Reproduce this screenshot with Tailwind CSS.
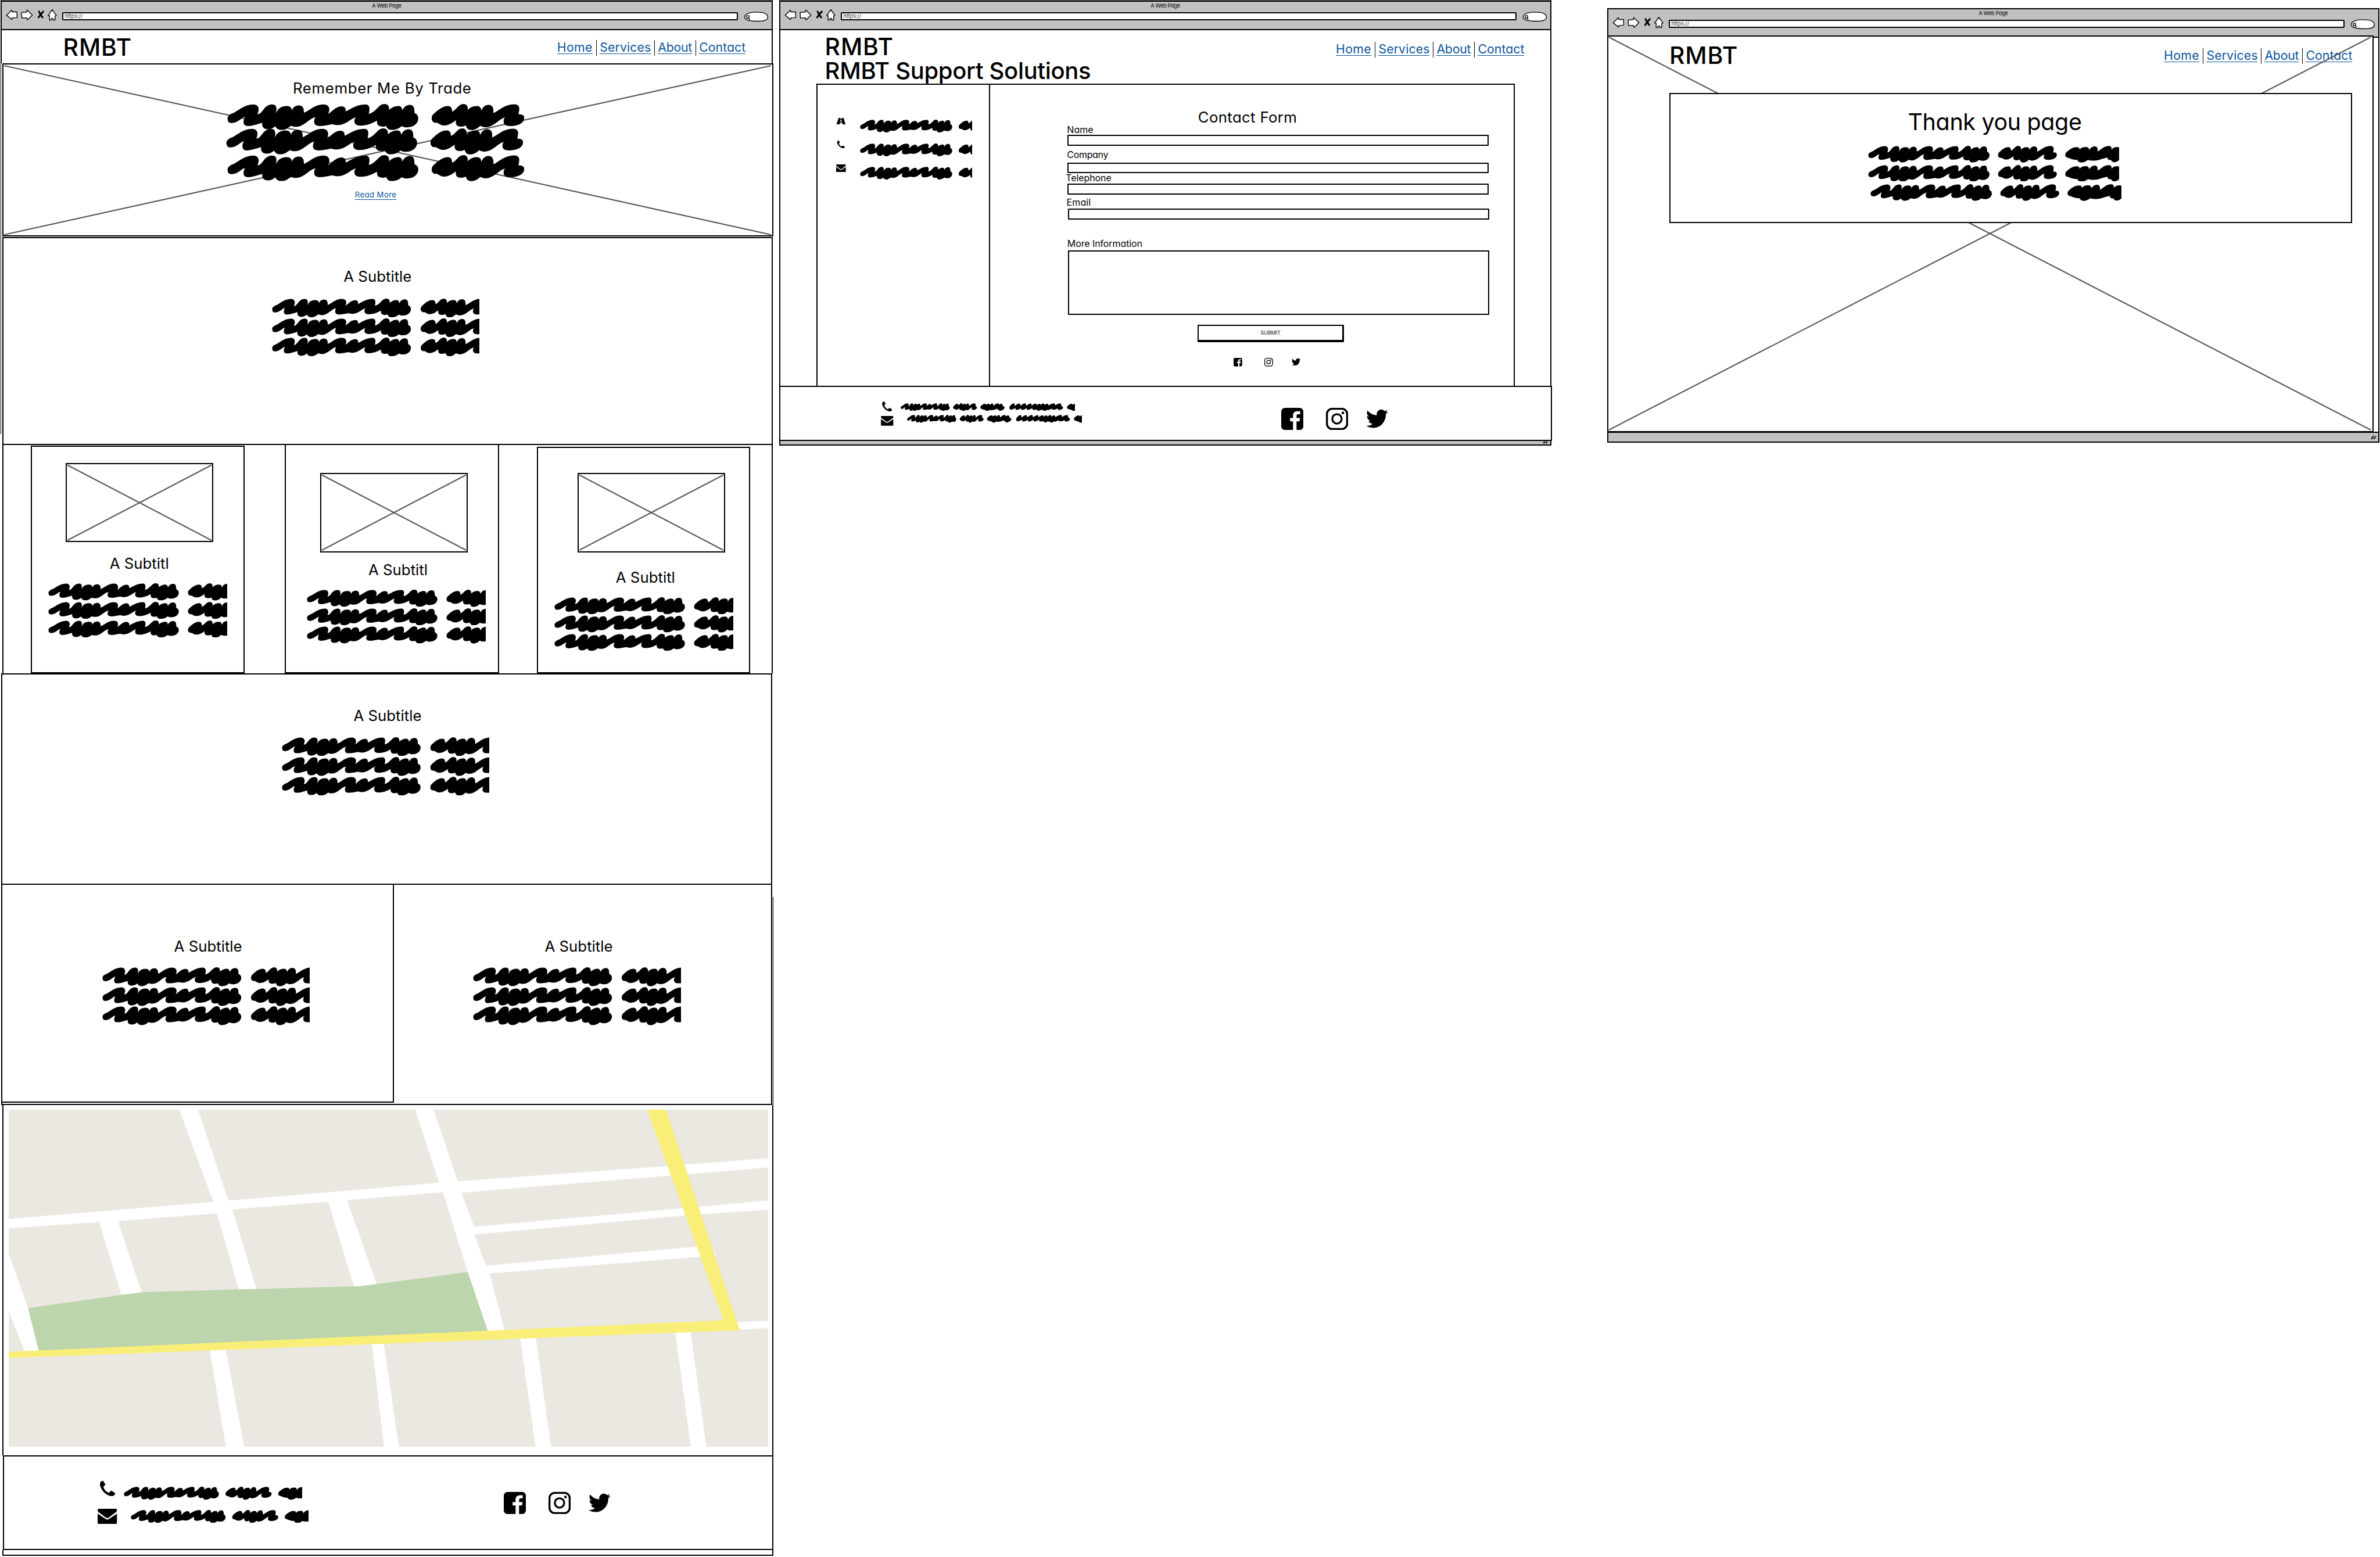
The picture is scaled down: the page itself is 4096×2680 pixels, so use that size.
<!DOCTYPE html>
<html lang="en">
<head>
<meta charset="utf-8">
<title>RMBT wireframes</title>
<script src="https://cdn.jsdelivr.net/npm/@tailwindcss/browser@4"></script>
</head>
<body class="relative w-[4096px] h-[2680px] overflow-hidden bg-white text-black font-['Inter',sans-serif] [font-feature-settings:'cv11'] leading-none whitespace-nowrap">

<!-- Shared shapes -->
<svg class="hidden" xmlns="http://www.w3.org/2000/svg">
  <defs>
    <path id="w1" d="M47 195C45 175 60 158 80 148C105 128 130 90 175 87C195 87 203 105 202 130C200 145 197 155 197 161C225 155 225 92 268 87C285 87 291 100 291 120L289 155C295 120 315 99 340 99C358 99 368 110 369 135C371 110 385 95 403 95C420 95 429 110 428 150C460 130 480 88 525 87C550 87 556 110 555 130C553 145 551 152 550 158C570 140 585 103 615 101C632 101 638 115 637 140C665 120 690 88 735 87C752 87 757 105 755 130C754 145 753 150 752 158C790 145 800 84 830 84C850 84 855 105 853 130C862 115 880 99 898 99C912 99 919 110 919 133C925 115 935 91 957 91C975 91 981 110 980 152C992 160 999 172 999 192C999 225 980 259 943 259C932 259 922 255 917 249C905 262 893 278 865 278C848 278 842 262 838 247C832 253 825 254 815 253C798 250 792 238 793 208C770 228 745 246 710 246C688 246 680 232 680 210C680 198 684 188 688 183C665 190 640 240 598 242C585 242 575 238 570 235C550 240 530 249 508 249C488 249 479 238 479 215C479 200 483 190 486 183C455 190 430 253 390 255C378 255 370 252 364 247C350 260 340 278 315 278C297 278 290 262 284 250C275 265 262 273 248 273C225 272 218 255 220 224C200 232 175 248 150 249C130 249 126 235 127 212C128 198 131 188 135 182C118 180 105 222 70 227C50 227 48 212 47 195Z"/>
    <path id="w2" d="M1066 192C1066 170 1075 158 1082 150C1100 125 1120 100 1147 99C1163 99 1168 118 1168 142C1190 128 1198 86 1225 84C1243 86 1248 105 1246 131C1255 112 1272 99 1290 99C1307 99 1314 112 1313 135C1320 112 1330 90 1350 90C1370 90 1376 112 1374 153C1405 130 1430 87 1478 86C1498 86 1505 105 1503 125C1502 145 1500 153 1499 161C1520 160 1528 170 1528 188C1528 225 1500 248 1460 249C1432 249 1425 235 1425 212C1425 200 1428 193 1432 186C1405 190 1380 255 1335 258C1325 258 1315 252 1309 247C1297 260 1288 279 1262 279C1245 278 1240 262 1236 244C1228 252 1218 254 1206 253C1190 250 1184 235 1187 206C1170 222 1155 246 1125 245C1110 243 1100 228 1092 224C1080 227 1075 222 1070 212C1066 205 1066 198 1066 192Z"/>
    <path id="w3" d="M1594 192C1594 170 1603 158 1610 150C1630 125 1650 102 1680 100C1704 100 1708 115 1706 130C1715 112 1730 98 1755 98C1775 98 1782 115 1781 135C1790 112 1805 90 1825 90C1845 90 1850 112 1848 150C1875 130 1895 87 1935 86C1955 86 1960 105 1958 130C1965 112 1980 98 2003 98C2022 98 2030 120 2028 152C2060 158 2068 180 2064 205C2055 240 2032 250 2012 256C1998 275 1985 279 1972 275C1960 268 1956 258 1955 250C1934 254 1926 240 1925 222C1905 228 1880 240 1855 250C1830 259 1790 259 1773 248C1755 266 1740 279 1722 279C1700 275 1690 262 1690 248C1668 250 1640 240 1620 225C1600 220 1594 205 1594 192Z"/>
    <g id="scribble"><use href="#w1"/><use href="#w2"/><use href="#w3"/></g>
    <g id="scribble-long"><use href="#scribble"/><path d="M2158 195C2160 165 2200 100 2240 88C2262 88 2264 115 2258 148C2290 130 2320 92 2352 90C2372 92 2374 118 2368 148C2400 130 2428 90 2462 88C2482 90 2486 118 2480 148C2510 130 2540 92 2572 90C2592 92 2594 118 2590 146C2612 128 2640 96 2668 94C2688 96 2694 112 2692 138C2706 116 2724 98 2744 98C2762 98 2768 112 2768 134C2780 112 2796 90 2818 90C2838 92 2844 108 2842 134C2856 112 2872 98 2892 98C2910 98 2918 114 2918 140C2945 125 2980 88 3022 86C3046 88 3052 110 3046 142C3076 122 3104 90 3140 88C3164 90 3172 118 3164 152C3192 150 3202 168 3201 190C3198 228 3166 248 3128 250C3104 248 3098 234 3100 212C3074 226 3044 246 3016 246C2990 244 2984 232 2986 214C2962 232 2936 252 2908 254L2884 250C2872 266 2858 279 2838 278C2822 276 2816 262 2812 248C2796 256 2780 256 2768 246C2752 266 2738 276 2718 274C2700 270 2694 256 2694 238C2672 244 2650 250 2630 248C2606 246 2602 230 2606 206C2576 226 2548 248 2520 248C2496 246 2492 230 2498 204C2468 226 2440 250 2412 250C2388 248 2382 232 2388 206C2358 228 2330 250 2302 250C2278 248 2274 230 2280 204C2250 222 2222 244 2192 244C2166 240 2158 220 2158 195Z"/><use href="#w3" x="1685"/></g>
    <g id="phone"><path d="M70 58C76 56 80 58 82 63L94 82C95 88 86 92 80 99C82 120 102 140 122 146C128 142 132 132 138 130L164 145C168 149 166 158 162 163C155 171 140 171 132 170C95 160 60 125 54 85C54 72 58 60 70 58Z"/></g>
    <g id="mail"><path d="M48 264H174Q183 264 183 274C183 283 178 288 172 292L125 327Q111 340 97 327L50 292C44 288 39 283 39 274Q39 264 48 264Z"/><path d="M39 300L97 339Q111 350 125 339L183 301V368Q183 377 174 377H48Q39 377 39 368Z"/></g>
    <path id="fb" d="M28 0H137A28 28 0 0 1 165 28V137A28 28 0 0 1 137 165H114V101H136L140 76H114V62C114 52 119 48 127 48H141V25H122C99 25 88 38 88 56V76H66V101H88V165H28A28 28 0 0 1 0 137V28A28 28 0 0 1 28 0Z"/>
    <g id="ig"><rect x="7" y="7" width="151" height="151" rx="40" fill="none" stroke="#000" stroke-width="15"/><circle cx="82" cy="82" r="35" fill="none" stroke="#000" stroke-width="14"/><circle cx="126" cy="38" r="10"/></g>
    <path id="tw" d="M23.953 4.57a10 10 0 01-2.825.775 4.958 4.958 0 002.163-2.723c-.951.555-2.005.959-3.127 1.184a4.92 4.92 0 00-8.384 4.482C7.69 8.095 4.067 6.13 1.64 3.162a4.822 4.822 0 00-.666 2.475c0 1.71.87 3.213 2.188 4.096a4.904 4.904 0 01-2.228-.616v.06a4.923 4.923 0 003.946 4.827 4.996 4.996 0 01-2.212.085 4.936 4.936 0 004.604 3.417 9.867 9.867 0 01-6.102 2.105c-.39 0-.779-.023-1.17-.067a13.995 13.995 0 007.557 2.209c9.053 0 13.998-7.496 13.998-13.985 0-.21 0-.42-.015-.63A9.935 9.935 0 0024 4.59z"/>
    <g id="navicons" fill="#fff" stroke="#000" stroke-width="6" stroke-linejoin="round" stroke-linecap="round">
      <path d="M50 113L88 75L92 88L127 88L128 131L93 132L89 145Z"/>
      <path d="M161 92L200 89L203 74L242 112L205 148L200 132L164 134Z"/>
      <path d="M291 85Q300 108 318 129M323 85Q306 104 288 129" stroke-width="13"/>
      <path d="M390 72L421 115L411 118L411 149L398 149L395 137L385 137L382 149L370 149L370 116L359 115Z"/>
    </g>
    <g id="searchpill"><path d="M206 126C206 100 245 88 295 88C345 88 378 98 379 125C380 150 345 156 310 156C260 156 208 152 206 126Z" fill="#fff" stroke="#000" stroke-width="6"/><circle cx="230" cy="123" r="10" fill="none" stroke="#000" stroke-width="6"/><path d="M236 131L242 141" stroke="#000" stroke-width="7" stroke-linecap="round"/></g>
  </defs>
</svg>

<!-- ============ Home page ============ -->
<section class="absolute left-0 top-0 w-[1332px] flex flex-col items-start">
  <div class="w-[1331px] h-px bg-[#777]"></div>
  <div class="ml-px w-[1329px] h-[51px] border-2 border-black bg-[#c1c1c1] flex flex-col">
    <div class="h-[11px] pt-[1.6px] text-center text-[9.2px] tracking-[-0.035em] leading-none">A Web Page</div>
    <div class="flex items-start">
      <svg class="ml-[6.2px] w-[90.2px] h-[23.1px] shrink-0" viewBox="40 60 390 100"><use href="#navicons"/></svg>
      <div class="ml-[7.6px] mt-[7px] w-[1163.5px] h-[14px] shrink-0 border-2 border-black rounded-[2px] bg-white pl-[2.5px] text-[9.3px] tracking-[-0.01em] text-[#333]">https://</div>
      <svg class="ml-[9.3px] mt-[4.6px] w-[42.8px] h-[19.6px] shrink-0" viewBox="200 80 185 85"><use href="#searchpill"/></svg>
    </div>
  </div>
  <header class="ml-px w-[1329px] h-[57px] border-x-2 border-black flex items-start justify-between">
    <h1 class="ml-[105.6px] mt-[9px] text-[40.8px] tracking-[0.022em] font-medium">RMBT</h1>
    <nav class="mt-[17px] mr-[45.5px] flex items-start gap-[5.3px] text-[21.3px] text-[#0b559b]">
      <a class="mt-[1.8px] border-b-[1.5px] border-[#0b559b] w-[61.4px] tracking-[0.014em]">Home</a><i class="w-[1.4px] h-[27px] bg-black"></i>
      <a class="mt-[1.8px] border-b-[1.5px] border-[#0b559b] w-[88px] tracking-[0.004em]">Services</a><i class="w-[1.4px] h-[27px] bg-black"></i>
      <a class="mt-[1.8px] border-b-[1.5px] border-[#0b559b] w-[59px] tracking-[-0.012em]">About</a><i class="w-[1.4px] h-[27px] bg-black"></i>
      <a class="mt-[1.8px] border-b-[1.5px] border-[#0b559b] w-[79.3px] tracking-[0.001em]">Contact</a>
    </nav>
  </header>
  <div class="relative ml-[4px] w-[1327px] h-[298px] border-2 border-black bg-white flex flex-col items-start">
    <svg class="absolute inset-0 w-full h-full" viewBox="0 0 1323 294"><path d="M1 2L1321 293M1 293L1321 2" stroke="#5a5a5a" stroke-width="2.2"/></svg>
    <h2 class="relative ml-[498px] mt-[27.8px] text-[25.8px] tracking-[0.025em]">Remember Me By Trade</h2>
    <svg class="relative ml-[384.5px] mt-[14.9px] w-[511.2px] h-[44.8px]" viewBox="45 84 1483 195" preserveAspectRatio="none"><use href="#w1"/><use href="#w2"/></svg>
    <svg class="relative ml-[383px] mt-[-3.2px] w-[511.2px] h-[44.8px]" viewBox="45 84 1483 195" preserveAspectRatio="none"><use href="#w1"/><use href="#w2"/></svg>
    <svg class="relative ml-[385px] mt-[0.9px] w-[511.2px] h-[44.8px]" viewBox="45 84 1483 195" preserveAspectRatio="none"><use href="#w1"/><use href="#w2"/></svg>
    <a class="relative ml-[604.8px] mt-[17.9px] text-[13.2px] tracking-[0.03em] text-[#0b559b] border-b border-[#0b559b]">Read More</a>
  </div>
  <div class="mt-px ml-[4px] w-[1326px] h-[358px] border-2 border-black flex flex-col items-start">
    <h2 class="ml-[585.3px] mt-[53.3px] text-[25.8px]">A Subtitle</h2>
    <svg class="ml-[461.5px] mt-[24.6px] w-[357.5px] h-[32.4px]" viewBox="45 84 1426 195" preserveAspectRatio="none"><use href="#scribble"/></svg>
    <svg class="ml-[461.5px] mt-[1.6px] w-[357.5px] h-[32.4px]" viewBox="45 84 1426 195" preserveAspectRatio="none"><use href="#scribble"/></svg>
    <svg class="ml-[461.5px] mt-[1px] w-[357.5px] h-[32.4px]" viewBox="45 84 1426 195" preserveAspectRatio="none"><use href="#scribble"/></svg>
  </div>
  <div class="ml-[4px] w-[1326px] h-[393px] border-x-2 border-black flex items-start">
    <article class="ml-[47px] mt-px w-[368px] h-[392px] border-2 border-black bg-white flex flex-col items-start">
      <svg class="ml-[57.8px] mt-[27.5px] w-[254px] h-[136.5px] border-2 border-black" viewBox="0 0 250 132.5"><path d="M1 1.5L249 131M1 131L249 1.5" stroke="#5a5a5a" stroke-width="2.2"/></svg>
      <h3 class="ml-[133.7px] mt-[24.2px] text-[25.8px]">A Subtitl</h3>
      <svg class="ml-[27.8px] mt-[21.2px] w-[307.9px] h-[29.5px]" viewBox="45 84 1307 195" preserveAspectRatio="none"><use href="#scribble"/></svg>
      <svg class="ml-[27.8px] mt-[2.2px] w-[307.9px] h-[29.5px]" viewBox="45 84 1307 195" preserveAspectRatio="none"><use href="#scribble"/></svg>
      <svg class="ml-[27.8px] mt-[2.2px] w-[307.9px] h-[29.5px]" viewBox="45 84 1307 195" preserveAspectRatio="none"><use href="#scribble"/></svg>
    </article>
    <article class="ml-[69px] mt-[-2px] w-[368.5px] h-[395px] border-2 border-black bg-white flex flex-col items-start">
      <svg class="ml-[58.5px] mt-[48px] w-[254px] h-[136.5px] border-2 border-black" viewBox="0 0 250 132.5"><path d="M1 1.5L249 131M1 131L249 1.5" stroke="#5a5a5a" stroke-width="2.2"/></svg>
      <h3 class="ml-[142px] mt-[17.3px] text-[25.8px]">A Subtitl</h3>
      <svg class="ml-[36px] mt-[21.5px] w-[307.9px] h-[29.5px]" viewBox="45 84 1307 195" preserveAspectRatio="none"><use href="#scribble"/></svg>
      <svg class="ml-[36px] mt-[2.2px] w-[307.9px] h-[29.5px]" viewBox="45 84 1307 195" preserveAspectRatio="none"><use href="#scribble"/></svg>
      <svg class="ml-[36px] mt-[2.2px] w-[307.9px] h-[29.5px]" viewBox="45 84 1307 195" preserveAspectRatio="none"><use href="#scribble"/></svg>
    </article>
    <article class="ml-[65px] mt-[3px] w-[367.5px] h-[390px] border-2 border-black bg-white flex flex-col items-start">
      <svg class="ml-[68.6px] mt-[43px] w-[254px] h-[136.5px] border-2 border-black" viewBox="0 0 250 132.5"><path d="M1 1.5L249 131M1 131L249 1.5" stroke="#5a5a5a" stroke-width="2.2"/></svg>
      <h3 class="ml-[134.3px] mt-[30.2px] text-[25.8px]">A Subtitl</h3>
      <svg class="ml-[28.4px] mt-[21.1px] w-[307.9px] h-[29.5px]" viewBox="45 84 1307 195" preserveAspectRatio="none"><use href="#scribble"/></svg>
      <svg class="ml-[28.4px] mt-[2.2px] w-[307.9px] h-[29.5px]" viewBox="45 84 1307 195" preserveAspectRatio="none"><use href="#scribble"/></svg>
      <svg class="ml-[28.4px] mt-[2.2px] w-[307.9px] h-[29.5px]" viewBox="45 84 1307 195" preserveAspectRatio="none"><use href="#scribble"/></svg>
    </article>
  </div>
  <div class="ml-[2px] w-[1327px] h-[364px] border-2 border-black bg-white flex flex-col items-start">
    <h2 class="ml-[604.4px] mt-[58.3px] text-[25.8px]">A Subtitle</h2>
    <svg class="ml-[481.4px] mt-[23.7px] w-[357px] h-[32.6px]" viewBox="45 84 1426 195" preserveAspectRatio="none"><use href="#scribble"/></svg>
    <svg class="ml-[481.4px] mt-[2px] w-[357px] h-[32.6px]" viewBox="45 84 1426 195" preserveAspectRatio="none"><use href="#scribble"/></svg>
    <svg class="ml-[481.4px] mt-[0.8px] w-[357px] h-[32.6px]" viewBox="45 84 1426 195" preserveAspectRatio="none"><use href="#scribble"/></svg>
  </div>
  <div class="ml-[2px] w-[1327px] h-[379px] border-x-2 border-b-2 border-black flex items-start">
    <div class="w-[674px] h-[375px] border-r-2 border-b-2 border-black flex flex-col items-start">
      <h2 class="ml-[295.6px] mt-[92.5px] text-[25.8px]">A Subtitle</h2>
      <svg class="ml-[171.7px] mt-[23.7px] w-[357.5px] h-[32.6px]" viewBox="45 84 1426 195" preserveAspectRatio="none"><use href="#scribble"/></svg>
      <svg class="ml-[171.7px] mt-[1.5px] w-[357.5px] h-[32.6px]" viewBox="45 84 1426 195" preserveAspectRatio="none"><use href="#scribble"/></svg>
      <svg class="ml-[171.7px] mt-[0.8px] w-[357.5px] h-[32.6px]" viewBox="45 84 1426 195" preserveAspectRatio="none"><use href="#scribble"/></svg>
    </div>
    <div class="flex flex-col items-start">
      <h2 class="ml-[259.5px] mt-[92.5px] text-[25.8px]">A Subtitle</h2>
      <svg class="ml-[136px] mt-[23.7px] w-[357.5px] h-[32.6px]" viewBox="45 84 1426 195" preserveAspectRatio="none"><use href="#scribble"/></svg>
      <svg class="ml-[136px] mt-[1.5px] w-[357.5px] h-[32.6px]" viewBox="45 84 1426 195" preserveAspectRatio="none"><use href="#scribble"/></svg>
      <svg class="ml-[136px] mt-[0.8px] w-[357.5px] h-[32.6px]" viewBox="45 84 1426 195" preserveAspectRatio="none"><use href="#scribble"/></svg>
    </div>
  </div>
  <div class="ml-[4px] w-[1327px] h-[603px] border-x-2 border-black pl-[9.4px] pt-[7.5px]">
    <svg class="w-[1307px] h-[580.3px]" viewBox="18 75 1532 1125" preserveAspectRatio="none">
      <rect x="18" y="75" width="1532" height="1125" fill="#ebe8e1"/>
      <g fill="#fff">
        <polygon points="362,75 400,75 461,378 469,408 519,680 483,680 438,421 431,383"/>
        <polygon points="838,75 875,75 924,314 931,352 957,466 957,492 981,596 988,622 1019,815 986,820 944,617 894,351 886,319"/>
        <polygon points="18,440 431,383 886,319 924,314 1347,263 1550,237 1550,268 1353,295 931,352 894,351 700,377 469,408 438,421 238,447 200,450 18,471"/>
        <polygon points="200,448 238,445 287,690 246,696"/>
        <polygon points="662,380 700,375 761,660 715,668"/>
        <polygon points="955,466 1376,404 1550,378 1550,409 1382,428 957,492"/>
        <polygon points="979,596 1406,532 1440,545 1445,562 1412,566 986,622"/>
        <polygon points="1470,785 1550,779 1550,804 1480,810"/>
        <polygon points="18,555 57,736 80,879 90,900 55,903 50,880 18,748"/>
        <polygon points="423,870 455,868 493,1200 456,1200"/>
        <polygon points="750,850 774,850 805,1200 775,1200"/>
        <polygon points="1049,830 1081,830 1112,1200 1081,1200"/>
        <polygon points="1362,810 1393,808 1425,1200 1394,1200"/>
      </g>
      <polygon fill="#bcd5ac" points="57,737 246,693 287,684 727,664 760,657 944,617 986,822 80,890"/>
      <polygon fill="#f9ee77" points="1306,75 1344,75 1493,811 18,904 18,883 1460,778"/>
    </svg>
  </div>
  <footer class="ml-[5px] w-[1326px] h-[163px] border-2 border-black flex items-start">
    <div class="w-[860.3px] pt-[42px] flex flex-col items-start">
      <div class="ml-[164.9px] h-[31.9px] flex items-start">
        <svg class="w-[26.1px] h-[26.3px]" viewBox="54 57 113 114"><use href="#phone"/></svg>
        <svg class="ml-[15.2px] mt-[10px] w-[307.3px] h-[22.5px]" viewBox="45 84 1791 195" preserveAspectRatio="none"><use href="#scribble"/></svg>
      </div>
      <div class="ml-[161.4px] mt-[15.9px] flex items-start">
        <svg class="w-[33.3px] h-[26.1px]" viewBox="39 264 144 113"><use href="#mail"/></svg>
        <svg class="ml-[23.3px] mt-[2px] w-[306.5px] h-[22.5px]" viewBox="45 84 1791 195" preserveAspectRatio="none"><use href="#scribble"/></svg>
      </div>
    </div>
    <div class="pt-[60.8px] flex items-start">
      <svg class="w-[38.1px] h-[38.1px]" viewBox="0 0 165 165"><use href="#fb"/></svg>
      <svg class="ml-[39px] w-[38.1px] h-[38.1px]" viewBox="0 0 165 165"><use href="#ig"/></svg>
      <svg class="ml-[30.7px] mt-[3.3px] w-[37.7px] h-[31.6px]" viewBox="0 2.25 24 19.5" preserveAspectRatio="none"><use href="#tw"/></svg>
    </div>
  </footer>
  <div class="ml-[4px] w-[1327px] h-[10px] border-x-2 border-b-2 border-black"></div>
  <!-- browser frame edges showing beside the sections -->
  <i class="absolute left-px top-[109px] w-px h-[638px] bg-black"></i>
  <i class="absolute left-[1330px] top-[1544px] w-px h-[360px] bg-black"></i>
</section>

<!-- ============ Contact page ============ -->
<section class="absolute left-[1340px] top-0 w-[1332px] flex flex-col items-start">
  <div class="w-[1331px] h-px bg-[#777]"></div>
  <div class="ml-px w-[1329px] h-[51px] border-2 border-black bg-[#c1c1c1] flex flex-col">
    <div class="h-[11px] pt-[1.6px] text-center text-[9.2px] tracking-[-0.035em] leading-none">A Web Page</div>
    <div class="flex items-start">
      <svg class="ml-[6.2px] w-[90.2px] h-[23.1px] shrink-0" viewBox="40 60 390 100"><use href="#navicons"/></svg>
      <div class="ml-[7.6px] mt-[7px] w-[1163.5px] h-[14px] shrink-0 border-2 border-black rounded-[2px] bg-white pl-[2.5px] text-[9.3px] tracking-[-0.01em] text-[#333]">https://</div>
      <svg class="ml-[9.3px] mt-[4.6px] w-[42.8px] h-[19.6px] shrink-0" viewBox="200 80 185 85"><use href="#searchpill"/></svg>
    </div>
  </div>
  <div class="ml-px w-[1329px] h-[612px] border-x-2 border-black flex flex-col items-start">
    <header class="w-full h-[91.5px] flex items-start justify-between">
      <div class="ml-[76.6px] mt-[8px]">
        <h1 class="text-[40.8px] tracking-[0.022em] font-medium">RMBT</h1>
        <h2 class="mt-[1.6px] text-[40px] tracking-[-0.008em] font-medium">RMBT Support Solutions</h2>
      </div>
      <nav class="mt-[20px] mr-[45.3px] flex items-start gap-[5.3px] text-[21.3px] text-[#0b559b]">
        <a class="mt-[1.8px] border-b-[1.5px] border-[#0b559b] w-[61.4px] tracking-[0.014em]">Home</a><i class="w-[1.4px] h-[27px] bg-black"></i>
        <a class="mt-[1.8px] border-b-[1.5px] border-[#0b559b] w-[88px] tracking-[0.004em]">Services</a><i class="w-[1.4px] h-[27px] bg-black"></i>
        <a class="mt-[1.8px] border-b-[1.5px] border-[#0b559b] w-[59px] tracking-[-0.012em]">About</a><i class="w-[1.4px] h-[27px] bg-black"></i>
        <a class="mt-[1.8px] border-b-[1.5px] border-[#0b559b] w-[79.3px] tracking-[0.001em]">Contact</a>
      </nav>
    </header>
    <div class="ml-[61.5px] w-[1202px] h-[520.5px] border-x-2 border-t-2 border-black flex items-start">
      <aside class="w-[297px] h-[518.5px] border-r-2 border-black pl-[32.5px] pt-[57.2px] flex flex-col items-start">
        <div class="h-[39.5px] flex items-start">
          <svg class="w-[16.6px] h-[11.4px]" viewBox="52 66 69 49" preserveAspectRatio="none"><path fill-rule="evenodd" d="M70 66H83V77H90V66H105L120 115H96V101H79V115H53ZM82 83H92V94H82Z"/></svg>
          <svg class="ml-[24.2px] mt-[3px] w-[193.6px] h-[22px]" viewBox="45 84 1163 195" preserveAspectRatio="none"><use href="#scribble"/></svg>
        </div>
        <div class="h-[40.7px] flex items-start">
          <svg class="w-[16.6px] h-[13.2px]" viewBox="54 57 113 114"><use href="#phone"/></svg>
          <svg class="ml-[24.2px] mt-[4.4px] w-[193.6px] h-[22px]" viewBox="45 84 1163 195" preserveAspectRatio="none"><use href="#scribble"/></svg>
        </div>
        <div class="flex items-start">
          <svg class="w-[16.6px] h-[13.4px]" viewBox="39 264 144 113" preserveAspectRatio="none"><use href="#mail"/></svg>
          <svg class="ml-[24.2px] mt-[3.7px] w-[193.6px] h-[22px]" viewBox="45 84 1163 195" preserveAspectRatio="none"><use href="#scribble"/></svg>
        </div>
      </aside>
      <form class="flex flex-col items-start text-[16px]">
        <h2 class="ml-[358.3px] mt-[43.7px] text-[25.8px] tracking-[0.013em]">Contact Form</h2>
        <label class="ml-[132.8px] mt-[0.6px] leading-[15.5px] tracking-[0.004em]">Name</label>
        <div class="ml-[133.3px] mt-px w-[725px] h-[18.5px] border-2 border-black rounded-[1px]"></div>
        <label class="ml-[132.8px] mt-[8.1px] leading-[15.5px] tracking-[-0.02em]">Company</label>
        <div class="ml-[133.3px] mt-[5.5px] w-[725px] h-[18.5px] border-2 border-black rounded-[1px]"></div>
        <label class="ml-[130.8px] mt-[0.6px] leading-[15.5px] tracking-[-0.006em]">Telephone</label>
        <div class="ml-[133.3px] mt-[2px] w-[725px] h-[18.5px] border-2 border-black rounded-[1px]"></div>
        <label class="ml-[132px] mt-[6.5px] leading-[15.5px] tracking-[0.008em]">Email</label>
        <div class="ml-[134.5px] mt-[2.6px] w-[725px] h-[18.5px] border-2 border-black rounded-[1px]"></div>
        <label class="ml-[133.3px] mt-[33.7px] leading-[15.5px] tracking-[-0.006em]">More Information</label>
        <div class="ml-[134.5px] mt-[3.8px] w-[725px] h-[111.5px] border-2 border-black rounded-[1px]"></div>
        <button type="button" class="ml-[357.6px] mt-[16.2px] w-[252px] h-[30px] border-l-2 border-t-2 border-r-[3px] border-b-4 border-black rounded-[1px] flex items-center justify-center text-[9.4px] tracking-[-0.03em] text-[#222]">SUBMIT</button>
        <div class="ml-[419.6px] mt-[27.5px] flex items-start">
          <svg class="w-[14.7px] h-[14.7px]" viewBox="0 0 165 165"><use href="#fb"/></svg>
          <svg class="ml-[38.6px] w-[14.7px] h-[14.7px]" viewBox="0 0 165 165"><use href="#ig"/></svg>
          <svg class="ml-[32.4px] mt-px w-[15.2px] h-[12.4px]" viewBox="0 2.25 24 19.5" preserveAspectRatio="none"><use href="#tw"/></svg>
        </div>
      </form>
    </div>
  </div>
  <footer class="ml-px w-[1330px] h-[95px] border-2 border-black flex items-start">
    <div class="w-[861.7px] pt-[25.2px] flex flex-col items-start">
      <div class="ml-[174.7px] h-[17.3px] flex items-start">
        <svg class="w-[17.3px] h-[17.3px]" viewBox="54 57 113 114"><use href="#phone"/></svg>
        <svg class="ml-[15px] mt-[2.5px] w-[300px] h-[13.6px]" viewBox="45 84 3389 195" preserveAspectRatio="none"><use href="#scribble-long"/></svg>
      </div>
      <div class="ml-[173px] mt-[8px] flex items-start">
        <svg class="w-[21.5px] h-[16.7px]" viewBox="39 264 144 113"><use href="#mail"/></svg>
        <svg class="ml-[23.3px] mt-[-2px] w-[301px] h-[13.6px]" viewBox="45 84 3389 195" preserveAspectRatio="none"><use href="#scribble-long"/></svg>
      </div>
    </div>
    <div class="pt-[35.8px] flex items-start">
      <svg class="w-[38.1px] h-[38.1px]" viewBox="0 0 165 165"><use href="#fb"/></svg>
      <svg class="ml-[38.8px] w-[38.1px] h-[38.1px]" viewBox="0 0 165 165"><use href="#ig"/></svg>
      <svg class="ml-[31px] mt-[3.6px] w-[37.9px] h-[31.4px]" viewBox="0 2.25 24 19.5" preserveAspectRatio="none"><use href="#tw"/></svg>
    </div>
  </footer>
  <div class="ml-px w-[1329px] h-[8px] border-x-2 border-b-2 border-black bg-[#c1c1c1] flex justify-end">
    <svg class="mr-[4px] w-[9px] h-[5px]" viewBox="0 0 9 5"><path d="M1 4L4 1M5 4L8 1" stroke="#000" stroke-width="2"/></svg>
  </div>
</section>

<!-- ============ Thank you page ============ -->
<section class="absolute left-[2765px] top-[13px] w-[1331px] flex flex-col items-start">
  <div class="mt-px ml-px w-[1329px] h-[51px] border-2 border-black bg-[#c1c1c1] flex flex-col">
    <div class="h-[11px] pt-[1.6px] text-center text-[9.2px] tracking-[-0.035em] leading-none">A Web Page</div>
    <div class="flex items-start">
      <svg class="ml-[6.2px] w-[90.2px] h-[23.1px] shrink-0" viewBox="40 60 390 100"><use href="#navicons"/></svg>
      <div class="ml-[7.6px] mt-[7px] w-[1163.5px] h-[14px] shrink-0 border-2 border-black rounded-[2px] bg-white pl-[2.5px] text-[9.3px] tracking-[-0.01em] text-[#333]">https://</div>
      <svg class="ml-[9.3px] mt-[4.6px] w-[42.8px] h-[19.6px] shrink-0" viewBox="200 80 185 85"><use href="#searchpill"/></svg>
    </div>
  </div>
  <div class="ml-px w-[1329px] h-[679px] border-r-2 border-black">
    <div class="relative mt-[-4px] w-[1319px] h-[683px] border-2 border-black bg-white flex flex-col items-start">
      <header class="w-full h-[96.5px] flex items-start justify-between">
        <h1 class="ml-[105px] mt-[11.8px] text-[40.8px] tracking-[0.022em] font-medium">RMBT</h1>
        <nav class="mt-[20.2px] mr-[35.3px] flex items-start gap-[5.3px] text-[21.3px] text-[#0b559b]">
          <a class="mt-[1.8px] border-b-[1.5px] border-[#0b559b] w-[61.4px] tracking-[0.014em]">Home</a><i class="w-[1.4px] h-[27px] bg-black"></i>
          <a class="mt-[1.8px] border-b-[1.5px] border-[#0b559b] w-[88px] tracking-[0.004em]">Services</a><i class="w-[1.4px] h-[27px] bg-black"></i>
          <a class="mt-[1.8px] border-b-[1.5px] border-[#0b559b] w-[59px] tracking-[-0.012em]">About</a><i class="w-[1.4px] h-[27px] bg-black"></i>
          <a class="mt-[1.8px] border-b-[1.5px] border-[#0b559b] w-[79.3px] tracking-[0.001em]">Contact</a>
        </nav>
      </header>
      <svg class="absolute inset-0 w-full h-full" viewBox="0 0 1315 679"><path d="M1 1L1312 677M1 677L1312 1" stroke="#5a5a5a" stroke-width="2.2"/></svg>
      <div class="relative ml-[104.5px] w-[1175.5px] h-[224px] border-2 border-black bg-white flex flex-col items-start">
        <h2 class="ml-[409px] mt-[29px] text-[39.4px] tracking-[-0.008em]">Thank you page</h2>
        <svg class="ml-[340px] mt-[21.2px] w-[432.2px] h-[28.7px]" viewBox="45 84 1973 195" preserveAspectRatio="none"><use href="#scribble"/></svg>
        <svg class="ml-[340px] mt-[3.9px] w-[432.2px] h-[28.7px]" viewBox="45 84 1973 195" preserveAspectRatio="none"><use href="#scribble"/></svg>
        <svg class="ml-[344.8px] mt-[4.5px] w-[432.2px] h-[28.7px]" viewBox="45 84 1973 195" preserveAspectRatio="none"><use href="#scribble"/></svg>
      </div>
    </div>
  </div>
  <div class="ml-px mt-[-1px] w-[1329px] h-[19px] border-2 border-black bg-[#c1c1c1] flex justify-end items-center">
    <svg class="mr-[3px] w-[10px] h-[8px]" viewBox="0 0 10 8"><path d="M1 7L5 1M5 7L9 2" stroke="#000" stroke-width="2"/></svg>
  </div>
</section>
</body>
</html>
